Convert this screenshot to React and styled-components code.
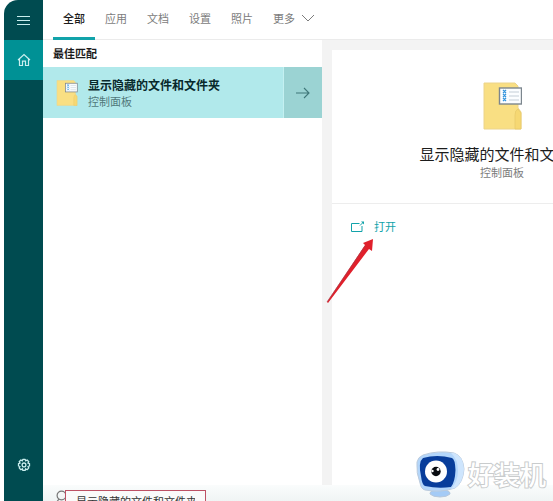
import React from 'react';
import styled, { createGlobalStyle, ThemeProvider } from 'styled-components';

const theme = {
  dark: '#004b50',
  teal: '#009195',
  accent: '#12a3aa',
  row: '#b1e9eb',
  rowArrow: '#9bd3d3',
  grey: '#f3f3f3',
  text: '#1c1c1c',
  muted: '#7c7c7c',
};

const GlobalStyle = createGlobalStyle`
  * {
    box-sizing: border-box;
  }

  body {
    margin: 0;
    overflow: hidden;
    background: #fff;
    font-family: 'Noto Sans CJK SC', sans-serif;
    font-size: 11px;
    line-height: 16px;
  }

  button, input {
    margin: 0;
    padding: 0;
    border: 0;
    background: none;
    font: inherit;
  }

  svg {
    display: block;
    flex: none;
  }
`;

const Page = styled.div`
  position: relative;
  display: flex;
  height: 100vh;
  padding-left: 4px;
  overflow: hidden;
  color: ${({ theme }) => theme.text};
`;

const Sidebar = styled.nav`
  display: flex;
  flex-direction: column;
  flex: none;
  width: 39px;
  padding-bottom: 16px;
  background: ${({ theme }) => theme.dark};
  border-top-left-radius: 14px;
  overflow: hidden;
`;

const SideButton = styled.button`
  display: flex;
  align-items: center;
  justify-content: center;
  height: 40px;
  color: #c9eeee;
  background: ${({ theme, $active }) => ($active ? theme.teal : 'transparent')};
  margin-top: ${({ $last }) => ($last ? 'auto' : 0)};
`;

const Main = styled.main`
  display: flex;
  flex-direction: column;
  flex: 1;
  min-width: 0;
`;

const Tabs = styled.div`
  display: flex;
  flex: none;
  height: 40px;
  padding-left: 10px;
  box-shadow: inset 0 -1px #ebebeb;
`;

const Tab = styled.button`
  display: flex;
  align-items: center;
  gap: 6px;
  padding: 0 10px 4px;
  color: ${({ theme, $active }) => ($active ? theme.text : theme.muted)};
  font-weight: ${({ $active }) => ($active ? 500 : 400)};
  box-shadow: ${({ theme, $active }) => ($active ? `inset 0 -3px ${theme.accent}` : 'none')};
`;

const Body = styled.div`
  display: flex;
  flex: 1;
  min-height: 0;
`;

const Results = styled.section`
  flex: none;
  width: 279px;
`;

const GroupTitle = styled.h2`
  margin: 0;
  padding: 5px 10px 6px;
  font-size: 11px;
  font-weight: 700;
  line-height: 16px;
`;

const ResultRow = styled.div`
  display: flex;
  height: 51px;
  background: ${({ theme }) => theme.row};
`;

const ResultButton = styled.button`
  display: flex;
  align-items: center;
  flex: 1;
  gap: 10px;
  padding-left: 13px;
  text-align: left;
  color: ${({ theme }) => theme.text};
`;

const ResultTitle = styled.div`
  font-size: 12px;
  font-weight: 700;
  color: #08282b;
`;

const ResultSource = styled.div`
  color: #52797b;
`;

const ExpandButton = styled.button`
  display: flex;
  align-items: center;
  justify-content: center;
  width: 39px;
  border-left: 1px solid #c4f0f1;
  background: ${({ theme }) => theme.rowArrow};
  color: #3f7779;
`;

const Detail = styled.section`
  position: relative;
  display: flex;
  flex: 1;
  min-width: 0;
  padding: 10px 0 0 10px;
  background: ${({ theme }) => theme.grey};
  overflow: hidden;
`;

const Card = styled.div`
  flex: none;
  width: 340px;
  background: #fff;
`;

const CardHeader = styled.div`
  display: flex;
  flex-direction: column;
  align-items: center;
  height: 154px;
  padding-top: 32px;
  border-bottom: 1px solid #ededed;
`;

const CardTitle = styled.h1`
  margin: 14px 0 0;
  font-size: 15px;
  font-weight: 400;
  line-height: 20px;
`;

const CardSource = styled.div`
  color: ${({ theme }) => theme.muted};
`;

const OpenButton = styled.button`
  display: flex;
  align-items: center;
  gap: 9px;
  padding: 14px 19px;
  color: ${({ theme }) => theme.accent};
`;

const Pointer = styled.svg`
  position: absolute;
  top: 199px;
  left: 4px;
`;

const SearchBar = styled.label`
  display: flex;
  flex: none;
  align-items: flex-start;
  height: 16px;
  padding: 5px 0 0 13px;
  background: linear-gradient(#fafcfc, #f0f4f4);
  overflow: hidden;
`;

const SearchInput = styled.input`
  width: 141px;
  height: 22px;
  margin-left: -3px;
  padding: 0 10px;
  border: 1px solid #bd5165;
  background: #fafafa;
  color: #333;
  outline: none;
`;

const Watermark = styled.div`
  position: absolute;
  right: 7px;
  bottom: 3px;
  display: flex;
  align-items: center;
  gap: 2px;
`;

const WatermarkText = styled.span`
  padding-bottom: 2px;
  font-size: 26px;
  font-weight: 500;
  line-height: 36px;
  color: #fff;
  -webkit-text-stroke: 2px #c9cccd;
  paint-order: stroke fill;
`;

const tabs = ['全部', '应用', '文档', '设置', '照片'];

const MenuIcon = () => (
  <svg width="14" height="10" viewBox="0 0 14 10" stroke="currentColor">
    <path d="M0 1.5h13M0 5.5h13M0 9.5h13" />
  </svg>
);

const HomeIcon = () => (
  <svg width="14" height="14" viewBox="0 0 14 14" fill="none" stroke="currentColor" strokeWidth="1.2">
    <path d="M1 7 7 1.5 13 7M2.5 6v6.5h3V8.2h3v4.3h3V6" />
  </svg>
);

const GearIcon = () => (
  <svg width="14" height="14" viewBox="0 0 14 14" fill="none" stroke="currentColor" strokeWidth="1.3" strokeLinejoin="round">
    <path d="M5.8.8h2.4l.4 1.6 1.5-.9 1.7 1.7-.9 1.5 1.6.4v2.4l-1.6.5.9 1.4-1.7 1.8-1.5-1-.4 1.7H5.8l-.4-1.7-1.5 1-1.7-1.8.9-1.4-1.6-.5V5.1l1.6-.4-.9-1.5 1.7-1.7 1.5.9z" transform="translate(0 .5)" />
    <circle cx="7" cy="6.9" r="1.9" />
  </svg>
);

const ChevronIcon = () => (
  <svg width="14" height="8" viewBox="0 0 14 8" fill="none" stroke="currentColor">
    <path d="m1 1 6 6 6-6" />
  </svg>
);

const ArrowIcon = () => (
  <svg width="14" height="12" viewBox="0 0 14 12" fill="none" stroke="currentColor" strokeWidth="1.1">
    <path d="M0 6h13M8 1l5 5-5 5" />
  </svg>
);

const OpenIcon = () => (
  <svg width="14" height="11" viewBox="0 0 14 11" fill="none" stroke="currentColor">
    <path d="M8.5 2.500H.5v8h10.500V5M9 4.500l3-3" />
    <path d="M10 .5h3v3z" fill="currentColor" stroke="none" />
  </svg>
);

const FolderIcon = ({ width, height }) => (
  <svg width={width} height={height} viewBox="0 0 39 48">
    <path d="M1 1h31l3 3v22l3 4v17H1z" fill="#f9df83" stroke="#ecd48b" />
    <path d="M32 47V33q0-5 3-6l3 4v16z" fill="#f6d873" stroke="#e6c969" strokeWidth=".7" />
    <rect x="16.500" y="6" width="22" height="16" fill="#fbfdff" stroke="#7c868e" strokeWidth="1.4" />
    <path d="m20 8 3 3m-3 1 3 3m-3 1 3 3M23 8l-3 3m3 1-3 3m3 1-3 3" stroke="#3595dd" strokeWidth="1.3" />
    <path d="M26 10h10M26 14h10M26 18h10" stroke="#c3cdd6" />
  </svg>
);

const SearchIcon = () => (
  <svg width="12" height="14" viewBox="0 0 12 14" fill="none" stroke="#777" strokeWidth="1.2">
    <circle cx="5.500" cy="5.500" r="4.400" />
    <path d="m3 9-3 4" />
  </svg>
);

const EyeLogo = () => (
  <svg width="50" height="47" viewBox="0 0 50 47">
    <path d="M18 38h11l1 1q5 2 4 4-3 3-10 3t-10-3q-1-2 4-4z" fill="#a4cbf6" stroke="#b6c8dc" />
    <path d="M7 4Q22-1 38 2q9 3 10 16-1 14-9 19-14 5-30 2-4-1-5-7Q0 22 1 11q1-5 6-7z" fill="#b3d6fb" stroke="#bccbdc" />
    <path d="M38 2q9 3 10 16-1 14-9 19l-4 1q7-8 7-18 0-12-7-18z" fill="#cee5fd" />
    <path d="M7 7q14-4 29 0 3 1 3.500 12-.5 12-4.500 17-13 2-26-1-3-1-4-10Q2 11 7 7z" fill="#083d9b" />
    <circle cx="20" cy="20.500" r="11" fill="#fff" />
    <circle cx="20" cy="20.500" r="4.700" fill="#080b10" />
    <circle cx="22" cy="18.500" r="1.400" fill="#fff" />
    <circle cx="16.500" cy="20" r="1.200" fill="#fff" />
  </svg>
);

const App = () => (
  <ThemeProvider theme={theme}>
    <GlobalStyle />
    <Page>
      <Sidebar>
        <SideButton aria-label="菜单"><MenuIcon /></SideButton>
        <SideButton $active aria-label="主页"><HomeIcon /></SideButton>
        <SideButton $last aria-label="设置"><GearIcon /></SideButton>
      </Sidebar>
      <Main>
        <Tabs>
          {tabs.map((tab, i) => (
            <Tab key={tab} $active={i === 0}>{tab}</Tab>
          ))}
          <Tab>更多<ChevronIcon /></Tab>
        </Tabs>
        <Body>
          <Results>
            <GroupTitle>最佳匹配</GroupTitle>
            <ResultRow>
              <ResultButton>
                <FolderIcon width="22" height="26" />
                <div>
                  <ResultTitle>显示隐藏的文件和文件夹</ResultTitle>
                  <ResultSource>控制面板</ResultSource>
                </div>
              </ResultButton>
              <ExpandButton aria-label="展开"><ArrowIcon /></ExpandButton>
            </ResultRow>
          </Results>
          <Detail>
            <Card>
              <CardHeader>
                <FolderIcon width="39" height="48" />
                <CardTitle>显示隐藏的文件和文件夹</CardTitle>
                <CardSource>控制面板</CardSource>
              </CardHeader>
              <OpenButton><OpenIcon />打开</OpenButton>
            </Card>
            <Pointer width="50" height="66" viewBox="0 0 50 66">
              <path d="M1 63 39 6l-2-2L47 0l-1 12-3-2L2 64z" fill="#e0202b" />
              <path d="M1 63 39 7" stroke="#a5404e" strokeWidth=".7" />
            </Pointer>
          </Detail>
        </Body>
        <SearchBar>
          <SearchIcon />
          <SearchInput type="text" aria-label="搜索" defaultValue="显示隐藏的文件和文件夹" />
        </SearchBar>
      </Main>
      <Watermark>
        <EyeLogo />
        <WatermarkText>好装机</WatermarkText>
      </Watermark>
    </Page>
  </ThemeProvider>
);

export default App;
